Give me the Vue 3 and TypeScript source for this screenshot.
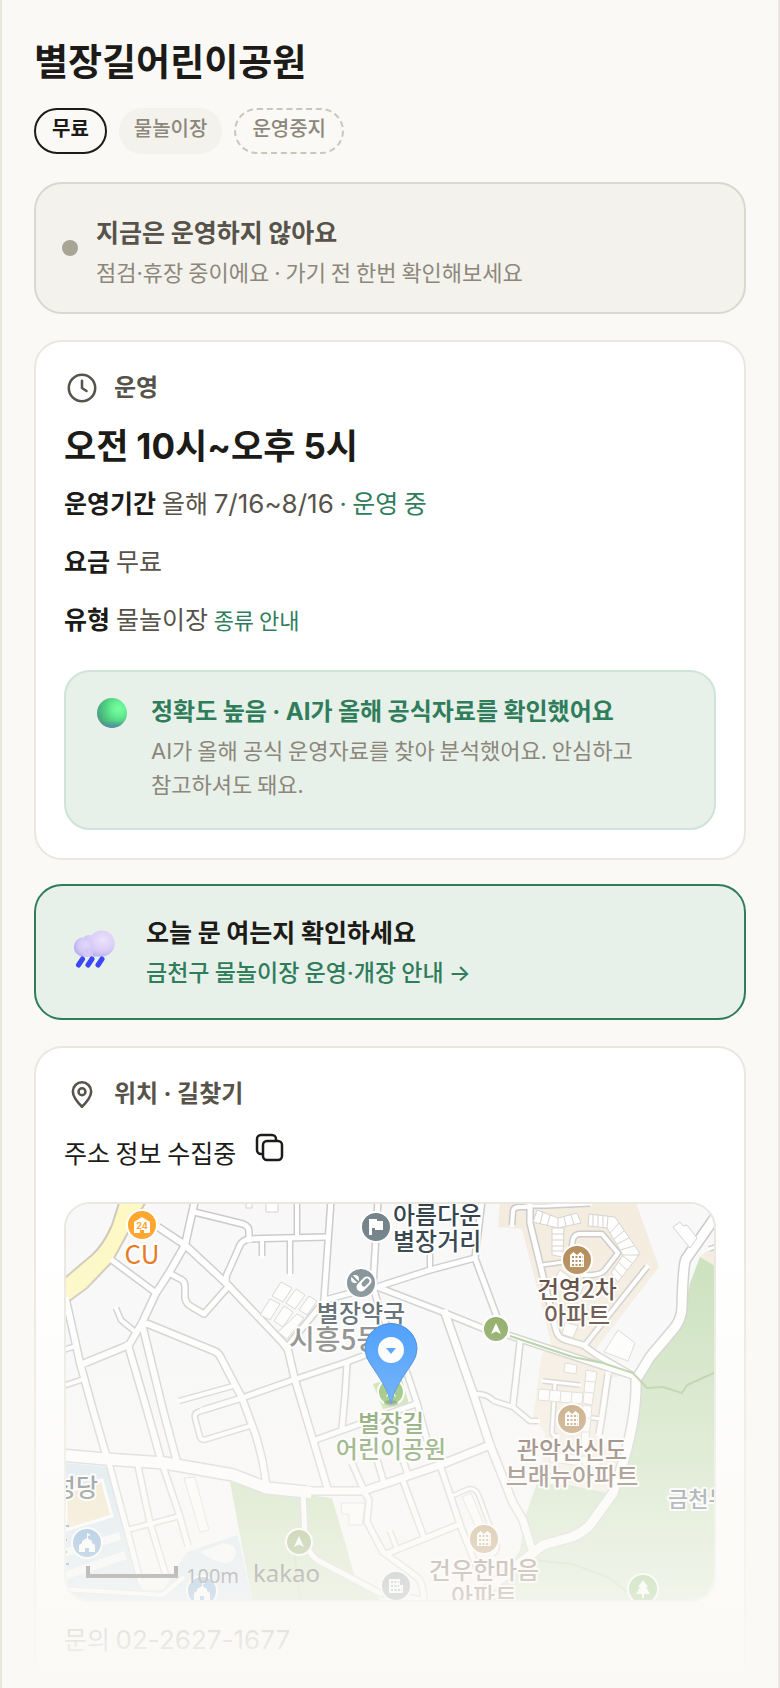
<script setup lang="ts">
interface Road {
  d: string
  w: number
}

interface Poi {
  kind: 'store' | 'flag' | 'pill' | 'apt' | 'nav' | 'church' | 'office' | 'tree'
  x: number
  y: number
  color: string
}

interface MapLabel {
  lines: string[]
  x: number
  y: number
  anchor: 'start' | 'middle' | 'end'
  color: string
  size: number
  weight?: number
}

const facts = [
  { term: '운영기간', kind: 'period' },
  { term: '요금', kind: 'fee' },
  { term: '유형', kind: 'type' },
]

const roads: Road[] = [
  { d: 'M195 1200L185 1245L169 1273L156 1293L142 1323L129 1345L85 1363', w: 6 },
  { d: 'M158 1227L185 1245L226 1283L283 1343L288 1350L295 1380L328 1490', w: 6 },
  { d: 'M194 1212L243 1224Q249 1226 249 1232V1240', w: 5 },
  { d: 'M226 1283Q225 1276 229 1270L240 1245Q243 1240 249 1239L325 1237', w: 5 },
  { d: 'M262 1239V1256', w: 4 },
  { d: 'M290 1240V1274', w: 4 },
  { d: 'M297 1200V1237', w: 4 },
  { d: 'M331 1200L324 1300', w: 5 },
  { d: 'M378 1200L373 1287', w: 5 },
  { d: 'M113 1261L156 1293', w: 5 },
  { d: 'M169 1273L182 1280Q185 1282 185 1287V1298Q186 1304 192 1307L204 1314L227 1288', w: 5 },
  { d: 'M116 1308L121 1320L133 1330', w: 4 },
  { d: 'M142 1324H148L214 1351Q219 1353 221 1358L242 1398L255 1433Q264 1462 266 1484', w: 6 },
  { d: 'M128 1345L147 1410L161 1460', w: 6 },
  { d: 'M143 1328L163 1410L177 1462', w: 6 },
  { d: 'M66 1300L80 1363L93 1410L107 1458', w: 6 },
  { d: 'M60 1351L76 1346', w: 4 },
  { d: 'M60 1387L84 1379', w: 4 },
  { d: 'M179 1401L233 1386', w: 4 },
  { d: 'M203 1410L242 1398L293 1380L347 1362L384 1348', w: 5 },
  { d: 'M242 1398L198 1412Q194 1414 195 1418L200 1437Q202 1441 207 1439L250 1426', w: 4 },
  { d: 'M60 1455L105 1459L165 1463L233 1475Q248 1479 262 1486L305 1491H363L402 1478L440 1465L490 1445', w: 7 },
  { d: 'M60 1455L105 1459L165 1463L233 1475L267 1488L306 1492', w: 11 },
  { d: 'M109 1463L127 1530L140 1580', w: 5 },
  { d: 'M138 1466L150 1523L166 1576', w: 5 },
  { d: 'M163 1466L180 1517L188 1546', w: 5 },
  { d: 'M127 1530L180 1516', w: 4 },
  { d: 'M303 1493L305 1537Q306 1551 317 1560L380 1593L423 1600', w: 5 },
  { d: 'M365 1493L369 1500L367 1522L383 1552L417 1577Q423 1582 424 1600', w: 5 },
  { d: 'M386 1554L458 1525', w: 5 },
  { d: 'M402 1478L423 1535', w: 5 },
  { d: 'M440 1465L462 1530L478 1570', w: 5 },
  { d: 'M390 1531L397 1549', w: 4 },
  { d: 'M352 1463L365 1493', w: 5 },
  { d: 'M377 1460L384 1483', w: 5 },
  { d: 'M401 1454L408 1475', w: 5 },
  { d: 'M315 1440L413 1405', w: 5 },
  { d: 'M347 1363L345 1395L342 1428', w: 5 },
  { d: 'M452 1496L466 1490Q475 1486 479 1496L497 1545Q498 1551 493 1554', w: 3 },
  { d: 'M373 1287L380 1310L407 1373L417 1403L427 1440', w: 5 },
  { d: 'M377 1287L430 1270L475 1258', w: 5 },
  { d: 'M430 1240V1269', w: 4 },
  { d: 'M482 1200L475 1258L497 1317', w: 5 },
  { d: 'M287 1347L325 1300L373 1287', w: 5 },
  { d: 'M380 1288L445 1313L487 1330', w: 5 },
  { d: 'M508 1335L590 1362L633 1376', w: 5 },
  { d: 'M445 1313L473 1393L490 1445L513 1503L523 1520L532 1550', w: 7 },
  { d: 'M475 1394Q486 1393 494 1401L513 1407L530 1421H538', w: 4 },
  { d: 'M520 1343L513 1405', w: 5 },
  { d: 'M512 1225L513 1212Q513 1207 519 1207H530', w: 4 },
  { d: 'M526 1206H545L590 1204', w: 3 },
  { d: 'M530 1205V1223L556 1330Q558 1338 566 1340L583 1345L597 1355L633 1376', w: 5 },
  { d: 'M585 1345L647 1267', w: 4 },
  { d: 'M572 1250Q571 1234 580 1234H602L618 1253L605 1270Q600 1276 583 1275', w: 4 },
  { d: 'M542 1265L564 1262', w: 3 },
  { d: 'M608 1374L602 1416L599 1434', w: 5 },
  { d: 'M555 1383L552 1432Q552 1436 558 1436', w: 3 },
  { d: 'M543 1381L580 1385', w: 3 },
  { d: 'M576 1416L602 1419', w: 3 },
  { d: 'M730 1190L714 1219L686 1259Q683 1265 682 1307Q682 1320 672 1331L650 1357L636 1380Q637 1415 623 1463L613 1493L590 1525Q582 1533 572 1537L543 1545L480 1595', w: 9 },
  { d: 'M718 1246L709 1249', w: 3 },
]

const buildings: string[] = [
  'M537 1210L533 1222L558 1228L581 1223L577 1213L558 1218Z M543 1212L540 1224 M550 1215L547 1226 M558 1218V1228 M564 1217L566 1226 M571 1215L574 1224',
  'M552 1228H564L563 1257L552 1255Z M552 1234H564 M552 1240H564 M552 1246H563 M552 1251H563',
  'M589 1214L615 1217L639 1252V1255L618 1282L611 1273L623 1255L607 1228L588 1226Z M593 1215V1227 M598 1215V1227 M603 1216V1227 M608 1216L607 1228 M619 1223L610 1233 M624 1231L614 1239 M629 1238L617 1244 M634 1246L620 1250 M623 1255H639 M632 1263L623 1256 M627 1270L618 1262 M622 1277L614 1268',
  'M565 1322L578 1326L573 1338L562 1334Z',
  'M560 1270L570 1277L563 1287L553 1281Z M572 1280L584 1286L578 1297L567 1291Z',
  'M618 1330L635 1343L628 1361L604 1352Z',
  'M565 1363L577 1365L576 1374L564 1372Z',
  'M586 1370L597 1372L592 1405L583 1403Z M584 1381L595 1382 M584 1392L594 1393',
  'M539 1389L583 1393L582 1404L538 1400Z M550 1390L549 1401 M561 1391L560 1402 M572 1392L571 1403',
  'M583 1405L592 1406L588 1450L581 1449Z M583 1418H590 M582 1432H590',
  'M550 1452L600 1458V1468L550 1462Z M565 1454V1464 M582 1456V1466',
  'M673 1227L680 1222L683 1226L687 1225L697 1238L690 1248Z',
  'M281 1282L292 1288L283 1302L272 1296Z M296 1289L305 1295L295 1309L286 1303Z M309 1296L317 1301L307 1315L299 1310Z M270 1299L280 1304L270 1320L260 1315Z M284 1306L293 1312L283 1327L274 1321Z M297 1314L304 1318L287 1339L278 1332Z',
  'M184 1478L195 1477L209 1530L200 1532Z',
  'M266 1200H278V1212H266Z M246 1200H252V1208H246Z',
  'M341 1503H365L362 1525H349V1514H342Z',
  'M462 1497L471 1493L485 1527L478 1532Z',
]

const pois: Poi[] = [
  { kind: 'store', x: 142, y: 1225, color: '#ffa62e' },
  { kind: 'flag', x: 376, y: 1227, color: '#74848a' },
  { kind: 'pill', x: 361, y: 1283, color: '#7c8b92' },
  { kind: 'apt', x: 577, y: 1260, color: '#b38a56' },
  { kind: 'nav', x: 496, y: 1329, color: '#7e9f50' },
  { kind: 'nav', x: 391, y: 1392, color: '#7bb455' },
  { kind: 'apt', x: 572, y: 1419, color: '#b38a56' },
  { kind: 'apt', x: 484, y: 1539, color: '#b38a56' },
  { kind: 'nav', x: 299, y: 1542, color: '#7e9f50' },
  { kind: 'church', x: 87, y: 1543, color: '#4b8dcb' },
  { kind: 'church', x: 202, y: 1591, color: '#4b8dcb' },
  { kind: 'office', x: 396, y: 1586, color: '#74848a' },
  { kind: 'tree', x: 643, y: 1589, color: '#6cb04c' },
]

const labels: MapLabel[] = [
  { lines: ['CU'], x: 142, y: 1264, anchor: 'middle', color: '#e67314', size: 26, weight: 400 },
  { lines: ['아름다운', '별장거리'], x: 393, y: 1224, anchor: 'start', color: '#36454d', size: 24 },
  { lines: ['시흥5동'], x: 289, y: 1350, anchor: 'start', color: '#777777', size: 28 },
  { lines: ['별장약국'], x: 361, y: 1322, anchor: 'middle', color: '#47565d', size: 24 },
  { lines: ['건영2차', '아파트'], x: 577, y: 1298, anchor: 'middle', color: '#533d32', size: 24 },
  { lines: ['별장길', '어린이공원'], x: 391, y: 1432, anchor: 'middle', color: '#55823a', size: 24 },
  { lines: ['관악산신도', '브래뉴아파트'], x: 572, y: 1459, anchor: 'middle', color: '#5d4335', size: 24 },
  { lines: ['건우한마음', '아파트'], x: 484, y: 1579, anchor: 'middle', color: '#5d4335', size: 24 },
  { lines: ['금천누리'], x: 668, y: 1507, anchor: 'start', color: '#4d6070', size: 22 },
  { lines: ['성당'], x: 98, y: 1496, anchor: 'end', color: '#3d4d57', size: 24 },
]
</script>

<template>
  <main class="page">
    <h1 class="title">별장길어린이공원</h1>

    <div class="chips">
      <span class="chip chip-solid">무료</span>
      <span class="chip chip-soft">물놀이장</span>
      <span class="chip chip-dashed">운영중지</span>
    </div>

    <section class="notice">
      <span class="dot" aria-hidden="true"></span>
      <div class="notice-text">
        <p class="notice-title">지금은 운영하지 않아요</p>
        <p class="sub">점검<span class="num">·</span>휴장 중이에요 <span class="num">·</span> 가기 전 한번 확인해보세요</p>
      </div>
    </section>

    <section class="card">
      <h2 class="card-head">
        <svg viewBox="0 0 24 24" aria-hidden="true">
          <circle cx="12" cy="12" r="8.8" />
          <path d="M12 7.2V12l3 2" />
        </svg>
        <span>운영</span>
      </h2>
      <p class="hours">오전 <span class="num">10</span>시<span class="num">~</span>오후 <span class="num">5</span>시</p>
      <dl class="facts">
        <div v-for="fact in facts" :key="fact.kind" class="fact">
          <dt>{{ fact.term }}</dt>
          <dd v-if="fact.kind === 'period'">
            올해 <span class="num digits">7/16~8/16</span> <span class="green"><span class="num">·</span> 운영 중</span>
          </dd>
          <dd v-else-if="fact.kind === 'fee'">무료</dd>
          <dd v-else>물놀이장 <a class="more" href="#types">종류 안내</a></dd>
        </div>
      </dl>
      <div class="trust">
        <svg class="ball" viewBox="0 0 36 36" aria-hidden="true">
          <defs>
            <radialGradient id="ballFill" cx="0.72" cy="0.36" r="0.75">
              <stop offset="0" stop-color="#74ff9f" />
              <stop offset="0.3" stop-color="#66f092" />
              <stop offset="0.75" stop-color="#4ac07e" />
              <stop offset="1" stop-color="#4b9d83" />
            </radialGradient>
            <linearGradient id="ballShade" x1="0" y1="0" x2="0" y2="1">
              <stop offset="0.75" stop-color="#5488a8" stop-opacity="0" />
              <stop offset="1" stop-color="#5488a8" stop-opacity="0.9" />
            </linearGradient>
          </defs>
          <circle cx="18" cy="21" r="15" fill="url(#ballFill)" />
          <circle cx="18" cy="21" r="15" fill="url(#ballShade)" />
        </svg>
        <div>
          <p class="trust-title">정확도 높음 <span class="num">·</span> <span class="num">AI</span>가 올해 공식자료를 확인했어요</p>
          <p class="sub">
            <span class="num">AI</span>가 올해 공식 운영자료를 찾아 분석했어요. 안심하고 참고하셔도 돼요.
          </p>
        </div>
      </div>
    </section>

    <a class="cta" href="#guide">
      <svg class="rain" viewBox="0 0 62 62" aria-hidden="true">
        <defs>
          <radialGradient id="cloudBig" cx="0.62" cy="0.36" r="0.7">
            <stop offset="0" stop-color="#ede3fb" />
            <stop offset="0.6" stop-color="#d9cdf8" />
            <stop offset="1" stop-color="#b7aee8" />
          </radialGradient>
          <radialGradient id="cloudSmall" cx="0.62" cy="0.4" r="0.65">
            <stop offset="0" stop-color="#e2d8fb" />
            <stop offset="0.6" stop-color="#d3c8f8" />
            <stop offset="1" stop-color="#b4abea" />
          </radialGradient>
        </defs>
        <circle cx="25" cy="22" r="6" fill="url(#cloudSmall)" />
        <path
          d="M20 37.500H38A13 13 0 1 0 25 21.500Q21 25 20 32Z"
          fill="url(#cloudBig)"
        />
        <circle cx="19.500" cy="28" r="9.700" fill="url(#cloudSmall)" />
        <path d="M23 37.500H19.500V30H29V37.500Z" fill="#d3c8f6" />
        <g stroke="#3b45fb" stroke-width="5" stroke-linecap="round">
          <path d="M18.500 40L14.500 46M28 40L24 46M38 40L34 46" />
        </g>
      </svg>
      <span class="cta-text">
        <strong>오늘 문 여는지 확인하세요</strong>
        <span>금천구 물놀이장 운영<span class="num">·</span>개장 안내 <span class="num">→</span></span>
      </span>
    </a>

    <section class="card card-last">
      <h2 class="card-head">
        <svg viewBox="0 0 24 24" aria-hidden="true">
          <path d="M12 20.500C9.500 18 5.900 14.300 5.900 10.300a6.100 6.100 0 0 1 12.200 0C18.100 14.300 14.500 18 12 20.500Z" />
          <circle cx="12" cy="10.500" r="2.300" />
        </svg>
        <span>위치 <span class="num">·</span> 길찾기</span>
      </h2>
      <div class="address">
        <span>주소 정보 수집중</span>
        <button type="button" class="copy" aria-label="주소 복사">
          <svg viewBox="0 0 32 32" aria-hidden="true">
            <rect x="9" y="9" width="19" height="19" rx="4" />
            <path d="M9 22H7a4 4 0 0 1-4-4V7a4 4 0 0 1 4-4h11a4 4 0 0 1 4 4v2" />
          </svg>
        </button>
      </div>

      <div class="map">
        <svg viewBox="66 1204 648 396" preserveAspectRatio="xMidYMid slice" role="img" aria-label="지도">
          <rect x="66" y="1204" width="648" height="396" fill="#f8f8f9" />

          <path d="M500 1200L498 1227L522 1229L552 1347L542 1353L533 1417L545 1433L540 1477L608 1493L623 1440L615 1377L633 1373L595 1350L659 1267L635 1200Z" fill="#f4ecdf" />
          <path d="M612 1377H634L636 1400L620 1465L600 1440Z" fill="#f8f8f9" />
          <path d="M709 1249L714 1245V1267L700 1257Z" fill="#f4ecdf" />
          <path d="M700 1257L720 1269V1604H486L520 1550L525 1517L537 1483L570 1485L608 1493L623 1470L636 1400L640 1377L682 1323L690 1283Z" fill="#c9e0bb" />
          <path d="M230 1482L267 1490L332 1498L355 1577L385 1604H253Z" fill="#c4dcae" />
          <path d="M66 1463L107 1467L133 1570L143 1590H163L187 1552L238 1535L253 1604H66Z" fill="#cfe1ee" />
          <path d="M66 1492L102 1480L112 1516L66 1530Z" fill="#f0dfb8" stroke="#fff" stroke-width="3" />
          <path d="M64 1549L119 1532L121 1540L64 1557ZM64 1572L124 1551L127 1559L64 1580ZM200 1552L223 1543Q236 1544 236 1553Q234 1563 225 1563Q215 1562 200 1552Z" fill="#f8f8f9" />
          <path d="M62 1589L163 1595L184 1577" fill="none" stroke="#d8d2d0" stroke-width="6" />
          <path d="M62 1589L163 1595L184 1577" fill="none" stroke="#fff" stroke-width="4" />
          <path d="M373 1384L401 1376L409 1404L383 1409Z" fill="#bfdd9f" />
          <path d="M120 1200L112 1225Q104 1244 92 1255L60 1282V1308L87 1288L112 1262L131 1227L147 1200Z" fill="#fdf8c4" stroke="#cfc9ba" stroke-width="2" />

          <g fill="none" stroke-linejoin="round">
            <path v-for="(road, i) in roads" :key="'c' + i" :d="road.d" stroke="#cbcbcb" :stroke-width="road.w + 3" />
            <path v-for="(road, i) in roads" :key="'f' + i" :d="road.d" stroke="#ffffff" :stroke-width="road.w" stroke-linecap="square" />
          </g>
          <path v-for="(shape, i) in buildings" :key="'b' + i" :d="shape" fill="#fefefe" stroke="#d6d3cf" stroke-width="1" />

          <path d="M510 1336L573 1357L603 1363L633 1373L647 1388L663 1387L682 1393L687 1385L718 1371" fill="none" stroke="#a5c793" stroke-width="2" />
          <path d="M533 1560L572 1564L608 1577L627 1592M295 1555L297 1580L301 1602" fill="none" stroke="#b3cc9c" stroke-width="2" />
          <path d="M66 1526H69M66 1540H67M66 1552H67M66 1564H69" stroke="#1d6fc0" stroke-width="2" />

          <g v-for="(poi, i) in pois" :key="'p' + i" :transform="`translate(${poi.x} ${poi.y})`">
            <circle :r="poi.kind === 'nav' ? 13 : 15" :fill="poi.color" stroke="#fff" stroke-width="2" />
            <g v-if="poi.kind === 'store'">
              <path d="M-8 8V-3L0 -8L8 -3V8H2V5H-2V8Z" fill="#fff" />
              <text class="store-num" x="0" y="4" text-anchor="middle" :fill="poi.color">24</text>
            </g>
            <path v-else-if="poi.kind === 'flag'" d="M-7 8V-8H1V-6H7V3H-1V1H-4V8Z" fill="#fff" />
            <g v-else-if="poi.kind === 'pill'" stroke-linecap="round">
              <path d="M0 4L6 -2" stroke="#fff" stroke-width="9" />
              <path d="M3 1L6 -2" :stroke="poi.color" stroke-width="5" />
              <circle cx="-6" cy="-4" r="4" fill="#fff" />
              <path d="M-9 -7L-3 -1" :stroke="poi.color" stroke-width="2" />
            </g>
            <g v-else-if="poi.kind === 'apt'">
              <path d="M-7 7V-5L-3.500 -8L0 -5L3.500 -8L7 -5V7Z" fill="#fff" />
              <path d="M-5 -3H6M-5 1H6M-5 5H6" :stroke="poi.color" stroke-width="2" stroke-dasharray="2 1.500" />
            </g>
            <path v-else-if="poi.kind === 'nav'" d="M0 -6L5 5L0 2.500L-5 5Z" fill="#fff" />
            <g v-else-if="poi.kind === 'church'" fill="#fff">
              <path d="M-8 9V2L-5 0V-2L0 -5L5 -2V0L8 2V9H2V5H-2V9Z" />
              <path d="M0 -4V-10L4 -8L1 -7V-4Z" />
            </g>
            <g v-else-if="poi.kind === 'office'">
              <path d="M-7 7V-7H4V-1H7V7Z" fill="#fff" />
              <path d="M-5 -4H3M-5 0H3M-5 4H6" :stroke="poi.color" stroke-width="2" stroke-dasharray="2 1.500" />
            </g>
            <path v-else d="M0 -9L5 -2H3L7 5H1V9H-1V5H-7L-3 -2H-5Z" fill="#fff" />
          </g>

          <g class="map-label">
            <text
              v-for="label in labels"
              :key="label.lines[0]"
              :text-anchor="label.anchor"
              :fill="label.color"
              :font-size="label.size"
              :font-weight="label.weight ?? 500"
            >
              <tspan v-for="(line, n) in label.lines" :key="line" :x="label.x" :y="label.y + n * 26">{{ line }}</tspan>
            </text>
          </g>

          <ellipse cx="391" cy="1403" rx="7" ry="3" fill="#3f6b34" opacity="0.6" />
          <path
            d="M391 1404C388 1389 379 1377 371 1365Q365 1357 365 1349A26 25.500 0 0 1 417 1349Q417 1357 411 1365C403 1377 394 1389 391 1404Z"
            fill="#248afc"
            stroke="#1a6fd8"
            stroke-width="1"
          />
          <circle cx="391" cy="1350" r="13" fill="#fff" />
          <path d="M386 1348H396L391 1354Z" fill="#248afc" />

          <path d="M88 1566V1576H176V1566" fill="none" stroke="#111" stroke-width="4" />
          <text class="scale-text" x="186" y="1583">100m</text>
          <text class="kakao" x="253" y="1582">kakao</text>
        </svg>
      </div>
      <p class="contact">문의 <span class="num digits">02-2627-1677</span></p>
    </section>

    <div class="fade" aria-hidden="true"></div>
  </main>
</template>

<style>
body {
  margin: 0;
  background: #faf9f5;
}
</style>

<style scoped>
* {
  box-sizing: border-box;
}

.page {
  position: relative;
  display: flex;
  flex-direction: column;
  min-height: 100vh;
  padding: 36px 32px 0;
  overflow: hidden;
  border: solid #e8e6de;
  border-width: 0 2px;
  background: #faf9f5;
  color: #1c1b18;
  font-family: "Noto Sans CJK KR", "Noto Sans", sans-serif;
  font-size: 25px;
  line-height: 40px;
  word-break: keep-all;
}

p,
h1,
h2,
dl,
dd {
  margin: 0;
}

a {
  color: inherit;
  text-decoration: none;
}

.num {
  font-family: Inter, "Noto Sans CJK KR", sans-serif;
  line-height: 1;
}

.digits {
  font-size: 26px;
}

.title {
  font-size: 37px;
  font-weight: 700;
  line-height: 48px;
}

.chips {
  display: flex;
  gap: 12px;
  margin-top: 24px;
}

.chip {
  display: flex;
  align-items: center;
  height: 46px;
  padding: 0 16px 6px;
  border-radius: 23px;
  font-size: 20px;
  font-weight: 500;
  line-height: 28px;
}

.chip-solid {
  border: 2px solid #1c1b18;
  font-weight: 700;
}

.chip-soft {
  padding: 0 15px 6px;
  background: #f3f2ed;
  color: #8c877a;
}

.chip-dashed {
  border: 2px dashed #c9c6bb;
  color: #8c877a;
}

.notice {
  display: flex;
  align-items: center;
  gap: 18px;
  margin-top: 28px;
  padding: 24px 26px;
  border: 2px solid #d9d8cf;
  border-radius: 28px;
  background: #f3f2ed;
}

.notice-text {
  padding-top: 4px;
}

.dot {
  flex: none;
  width: 16px;
  height: 16px;
  border-radius: 50%;
  background: #a8a496;
}

.notice-title {
  color: #57534a;
  font-size: 25px;
  font-weight: 700;
  line-height: 38px;
}

.sub {
  margin-top: 4px;
  color: #8c877a;
  font-size: 22px;
  line-height: 34px;
}

.card {
  margin-top: 26px;
  padding: 28px;
  border: 2px solid #e9e7e0;
  border-radius: 28px;
  background: #fff;
}

.card-last {
  flex: 1;
  border-bottom: 0;
  border-radius: 28px 28px 0 0;
}

.card-head {
  display: flex;
  gap: 14px;
  color: #57534a;
  font-size: 24px;
  font-weight: 700;
  line-height: 32px;
}

.card-head svg {
  width: 36px;
  height: 36px;
  fill: none;
  stroke: currentColor;
  stroke-width: 1.7;
  stroke-linecap: round;
  stroke-linejoin: round;
}

.hours {
  margin-top: 14px;
  font-size: 35px;
  font-weight: 700;
  line-height: 48px;
}

.facts {
  display: flex;
  flex-direction: column;
  gap: 18px;
  margin-top: 14px;
}

.fact {
  display: flex;
  gap: 6px;
}

.fact dt {
  font-weight: 700;
}

.fact dd {
  color: #57534a;
}

.green,
.more {
  color: #2f7d5b;
}

.more {
  font-size: 22px;
  line-height: 1;
}

.trust {
  display: flex;
  gap: 21px;
  margin-top: 32px;
  padding: 20px 28px 28px;
  border: 2px solid #cfe3d8;
  border-radius: 26px;
  background: #e8f0ea;
}

.ball {
  flex: none;
  width: 36px;
  height: 36px;
}

.trust-title {
  color: #2f7d5b;
  font-size: 24px;
  font-weight: 700;
  line-height: 36px;
}

.cta {
  display: flex;
  align-items: center;
  gap: 20px;
  margin-top: 24px;
  padding: 26px 28px 30px;
  border: 2px solid #2f7d5b;
  border-radius: 28px;
  background: #e8f0ea;
}

.rain {
  flex: none;
  width: 62px;
  height: 62px;
}

.cta-text {
  display: flex;
  flex-direction: column;
  gap: 4px;
  color: #2f7d5b;
  font-size: 23px;
  font-weight: 500;
  line-height: 34px;
}

.cta-text strong {
  color: #1c1b18;
  font-size: 25px;
  font-weight: 700;
  line-height: 38px;
}

.address {
  display: flex;
  align-items: center;
  gap: 18px;
  margin-top: 20px;
}

.copy {
  display: flex;
  padding: 0 0 8px;
  border: 0;
  background: none;
  color: #1c1b18;
}

.copy svg {
  width: 32px;
  height: 32px;
  fill: none;
  stroke: currentColor;
  stroke-width: 2.5;
}

.map {
  margin-top: 30px;
  overflow: hidden;
  border: 2px solid #e9e7e0;
  border-radius: 26px;
}

.map svg {
  display: block;
  width: 100%;
  aspect-ratio: 648 / 396;
}

.map-label text {
  paint-order: stroke;
  stroke: #fff;
  stroke-width: 4px;
  stroke-linejoin: round;
}

.store-num {
  font-family: Inter, sans-serif;
  font-size: 9px;
  font-weight: 700;
}

.scale-text {
  fill: #222;
  font-family: "Noto Sans", sans-serif;
  font-size: 20px;
}

.kakao {
  fill: #111;
  font-family: "Noto Sans", sans-serif;
  font-size: 24px;
}

.contact {
  margin-top: 16px;
  color: #57534a;
}

.fade {
  position: absolute;
  right: 0;
  bottom: 0;
  left: 0;
  height: 460px;
  background: linear-gradient(rgba(250, 249, 245, 0), #faf9f5);
  pointer-events: none;
}
</style>
